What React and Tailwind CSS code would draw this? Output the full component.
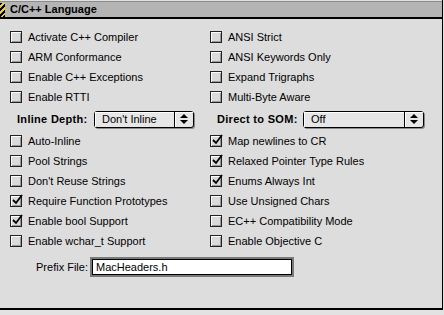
const font = { fontFamily: '"Liberation Sans", Arial, sans-serif' };

const leftItems = [
  ['Activate C++ Compiler', false],
  ['ARM Conformance', false],
  ['Enable C++ Exceptions', false],
  ['Enable RTTI', false],
];
const rightItems = [
  ['ANSI Strict', false],
  ['ANSI Keywords Only', false],
  ['Expand Trigraphs', false],
  ['Multi-Byte Aware', false],
];
const leftItems2 = [
  ['Auto-Inline', false],
  ['Pool Strings', false],
  ["Don't Reuse Strings", false],
  ['Require Function Prototypes', true],
  ['Enable bool Support', true],
  ['Enable wchar_t Support', false],
];
const rightItems2 = [
  ['Map newlines to CR', true],
  ['Relaxed Pointer Type Rules', true],
  ['Enums Always Int', true],
  ['Use Unsigned Chars', false],
  ['EC++ Compatibility Mode', false],
  ['Enable Objective C', false],
];

function Checkbox({ label, checked }) {
  return (
    <div className="h-5 flex items-center gap-[6px]">
      <div className="relative w-3 h-3 border border-[#222] bg-[#dadada] shadow-[inset_1px_1px_0_#fff,inset_-1px_-1px_0_#999]">
        {checked && (
          <svg className="absolute -top-[2px] left-0" width="13" height="12" viewBox="0 0 13 12">
            <path d="M2 6 L5 9 L11 1" fill="none" stroke="#000" strokeWidth="1.8" />
          </svg>
        )}
      </div>
      <span className="text-[11px] text-black leading-none">{label}</span>
    </div>
  );
}

function Popup({ value, width }) {
  return (
    <div className={`${width} h-[17px] flex rounded-[3px] border border-black bg-[#e6e6e6] shadow-[1px_1px_0_#8a8a8a]`}>
      <div className="flex-1 flex items-center pl-[7px] text-[11px] leading-none shadow-[inset_1px_1px_0_#fff]">{value}</div>
      <div className="w-[19px] border-l border-black flex flex-col items-center justify-center gap-[2px] shadow-[inset_1px_1px_0_#fff]">
        <div className="w-0 h-0 border-l-[4px] border-r-[4px] border-b-[4px] border-l-transparent border-r-transparent border-b-black" />
        <div className="w-0 h-0 border-l-[4px] border-r-[4px] border-t-[4px] border-l-transparent border-r-transparent border-t-black" />
      </div>
    </div>
  );
}

export default function App() {
  return (
    <div className="w-[444px] h-[315px] bg-[#e2e2e2] overflow-hidden" style={font}>
      <div className="w-[443px] h-[310px] bg-[#dddddd] border-r border-b-2 border-black flex flex-col">
        {/* title bar */}
        <div className="h-[19px] border-t border-[#e0e0e0] border-b-2 border-b-black bg-[#b4b4b4] flex items-center shadow-[inset_0_1px_0_#8c8c8c]">
          <div className="w-[5px] h-[14px] mt-[1px] bg-[repeating-linear-gradient(135deg,#000_0_2px,#f2d400_2px_4px)]" />
          <span className="ml-[5px] text-[11px] font-bold text-black leading-none">C/C++ Language</span>
        </div>

        <div className="pt-[8px] grid grid-cols-[200px_1fr] pl-[10px]">
          <div>
            {leftItems.map(([l, c]) => <Checkbox key={l} label={l} checked={c} />)}
          </div>
          <div>
            {rightItems.map(([l, c]) => <Checkbox key={l} label={l} checked={c} />)}
          </div>
        </div>

        <div className="h-6 grid grid-cols-[200px_1fr] items-center">
          <div className="flex items-center pl-[17px]">
            <span className="w-[77px] text-[11px] font-bold leading-none tracking-[0.3px]">Inline Depth:</span>
            <Popup value="Don't Inline" width="w-[100px]" />
          </div>
          <div className="flex items-center pl-[17px]">
            <span className="w-[86px] text-[11px] font-bold leading-none tracking-[0.3px]">Direct to SOM:</span>
            <Popup value="Off" width="w-[121px]" />
          </div>
        </div>

        <div className="grid grid-cols-[200px_1fr] pl-[10px]">
          <div>
            {leftItems2.map(([l, c]) => <Checkbox key={l} label={l} checked={c} />)}
          </div>
          <div>
            {rightItems2.map(([l, c]) => <Checkbox key={l} label={l} checked={c} />)}
          </div>
        </div>

        <div className="mt-[6px] flex items-center h-5">
          <span className="w-[90px] text-right pr-[2px] text-[11px] leading-none">Prefix File:</span>
          <div className="w-[204px] h-5 border-2 border-[#7a7a7a] bg-white flex items-center">
            <div className="w-full h-full border border-black flex items-center pl-[3px] text-[11px] leading-none">MacHeaders.h</div>
          </div>
        </div>
      </div>
    </div>
  );
}
